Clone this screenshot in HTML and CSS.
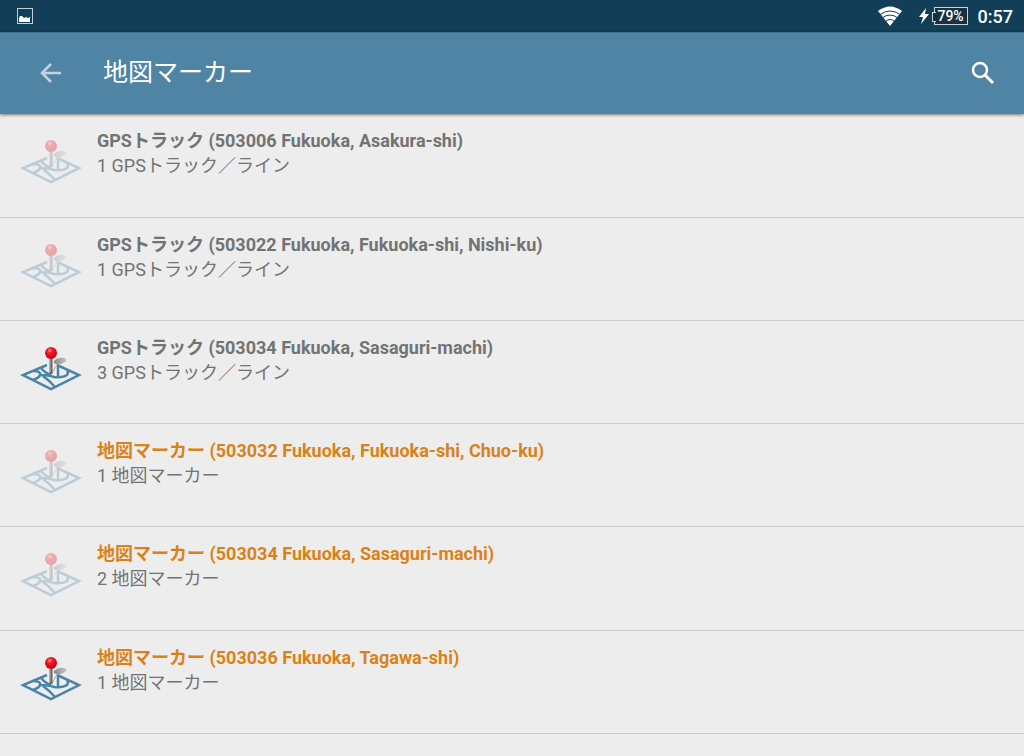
FILE: index.html
```html
<!DOCTYPE html>
<html lang="ja">
<head>
<meta charset="utf-8">
<meta name="viewport" content="width=device-width, initial-scale=1">
<title>地図マーカー</title>
<link rel="stylesheet" href="styles.css">
</head>
<body>

<svg class="defs" aria-hidden="true">
  <defs>
    <radialGradient id="pin-head" cx="0.4" cy="0.3" r="0.7">
      <stop offset="0" stop-color="#ff9a9a"/>
      <stop offset="0.3" stop-color="#f01c24"/>
      <stop offset="1" stop-color="#c80010"/>
    </radialGradient>
    <linearGradient id="pin-shadow" x1="0" y1="0" x2="1" y2="0">
      <stop offset="0" stop-color="#888"/>
      <stop offset="1" stop-color="#c4c4c4"/>
    </linearGradient>
    <symbol id="map-marker" viewBox="0 0 62 48">
      <g fill="none" stroke="#4a85a8" stroke-width="2.500">
        <path d="M27 21L3 31L31 45L59 31L37 21"/>
        <path d="M13 27Q21 27 20 31Q19 34 13 36"/>
        <path d="M21 24Q25 29 31 31"/>
        <path d="M20 31Q29 31 34 33Q43 34 47 31Q49 28 47 26"/>
        <path d="M23 32Q30 37 35 43"/>
        <path d="M38 22V32"/>
      </g>
      <path d="M32 29L38 19" stroke="#aaa" stroke-width="1"/>
      <ellipse cx="40" cy="17" rx="6.500" ry="3" transform="rotate(-12 40 17)" fill="url(#pin-shadow)"/>
      <path d="M31 13V30" stroke="#666" stroke-width="3"/>
      <path d="M30 13V28" stroke="#bbb" stroke-width="1"/>
      <circle cx="31" cy="9" r="6" fill="url(#pin-head)"/>
    </symbol>
  </defs>
</svg>

<div class="status-bar">
  <svg class="picture-icon" viewBox="0 0 16 16">
    <rect x="0.500" y="0.500" width="15" height="15" fill="none" stroke="#c3d0d8"/>
    <path d="M2 14V10L3 8H5L7 10L9 9L11 10L13 9V14Z" fill="#fff"/>
  </svg>
  <div class="status-info">
    <svg class="wifi-icon" viewBox="0 0 26 20">
      <path d="M1 5Q13 -4 25 5L13 20Z" fill="#fff"/>
      <g fill="none" stroke="#123e57" stroke-width="1">
        <path d="M3 8.500Q13 1.500 23 8.500"/>
        <path d="M5 12Q13 6 21 12"/>
        <path d="M8 15.500Q13 11.500 18 15.500"/>
      </g>
    </svg>
    <svg class="bolt-icon" viewBox="0 0 10 16">
      <path d="M7 0L0 9H4L2 16L10 6H6Z" fill="#fff"/>
    </svg>
    <span class="battery">79%</span>
    <span class="clock">0:57</span>
  </div>
</div>

<header class="app-bar">
  <button class="icon-button back" type="button" aria-label="戻る">
    <svg width="22" height="20" viewBox="0 0 22 20" fill="none" stroke="#c2d4df" stroke-width="2.500">
      <path d="M11 1L2 10L11 19M2 10H21"/>
    </svg>
  </button>
  <h1>地図マーカー</h1>
  <button class="icon-button search" type="button" aria-label="検索">
    <svg width="24" height="24" viewBox="0 0 24 24" fill="none" stroke="#fff">
      <circle cx="9" cy="9" r="7" stroke-width="2.500"/>
      <path d="M14 14L22 22" stroke-width="3"/>
    </svg>
  </button>
</header>

<ul class="list">
  <li class="item">
    <svg class="marker off"><use href="#map-marker"/></svg>
    <div class="text">
      <h2>GPSトラック (503006 Fukuoka, Asakura-shi)</h2>
      <p>1 GPSトラック／ライン</p>
    </div>
  </li>
  <li class="item">
    <svg class="marker off"><use href="#map-marker"/></svg>
    <div class="text">
      <h2>GPSトラック (503022 Fukuoka, Fukuoka-shi, Nishi-ku)</h2>
      <p>1 GPSトラック／ライン</p>
    </div>
  </li>
  <li class="item">
    <svg class="marker"><use href="#map-marker"/></svg>
    <div class="text">
      <h2>GPSトラック (503034 Fukuoka, Sasaguri-machi)</h2>
      <p>3 GPSトラック／ライン</p>
    </div>
  </li>
  <li class="item places">
    <svg class="marker off"><use href="#map-marker"/></svg>
    <div class="text">
      <h2>地図マーカー (503032 Fukuoka, Fukuoka-shi, Chuo-ku)</h2>
      <p>1 地図マーカー</p>
    </div>
  </li>
  <li class="item places">
    <svg class="marker off"><use href="#map-marker"/></svg>
    <div class="text">
      <h2>地図マーカー (503034 Fukuoka, Sasaguri-machi)</h2>
      <p>2 地図マーカー</p>
    </div>
  </li>
  <li class="item places">
    <svg class="marker"><use href="#map-marker"/></svg>
    <div class="text">
      <h2>地図マーカー (503036 Fukuoka, Tagawa-shi)</h2>
      <p>1 地図マーカー</p>
    </div>
  </li>
</ul>

</body>
</html>
```
FILE: styles.css
```css
* {
  box-sizing: border-box;
}

body {
  margin: 0;
  background: #ededed;
  color: #737373;
  font-family: Roboto, "Noto Sans CJK JP", sans-serif;
  font-size: 18px;
}

h1, h2, p, ul {
  margin: 0;
  padding: 0;
}

.defs {
  display: block;
  width: 0;
  height: 0;
}

/* status bar */

.status-bar {
  display: flex;
  align-items: center;
  justify-content: space-between;
  height: 32px;
  padding: 0 11px 0 17px;
  background: #123e57;
  color: #fff;
}

.picture-icon {
  width: 16px;
  height: 16px;
}

.status-info {
  display: flex;
  align-items: center;
}

.wifi-icon {
  width: 26px;
  height: 20px;
  margin-right: 16px;
}

.bolt-icon {
  width: 10px;
  height: 16px;
  margin-right: 5px;
}

.battery {
  position: relative;
  width: 34px;
  height: 18px;
  margin-right: 10px;
  border: 1px solid #c8d2d8;
  background: #17313f;
  font-size: 14px;
  font-weight: 500;
  line-height: 16px;
  text-align: center;
}

.battery::before {
  content: "";
  position: absolute;
  left: -3px;
  top: 4px;
  width: 3px;
  height: 8px;
  border: 1px solid #c8d2d8;
  border-right: 0;
  background: #17313f;
}

.clock {
  font-weight: 500;
}

/* title bar */

.app-bar {
  display: flex;
  align-items: center;
  height: 82px;
  padding: 0 29px 2px 40px;
  border-top: 1px solid #3d728f;
  background: #5084a4;
  box-shadow: 0 1px 3px rgba(0, 0, 0, 0.5);
  color: #fff;
}

.app-bar h1 {
  flex: 1;
  font-size: 25px;
  font-weight: 400;
  line-height: 32px;
}

.icon-button {
  display: flex;
  padding: 0;
  border: 0;
  background: none;
  cursor: pointer;
}

.back {
  margin-right: 41px;
}

/* list */

.list {
  list-style: none;
}

.item {
  display: flex;
  gap: 15px;
  height: 103px;
  padding: 14px 20px;
  border-bottom: 1px solid #cbcbcb;
}

.item:nth-child(4n + 1) {
  height: 104px;
}

.marker {
  flex: none;
  width: 62px;
  height: 48px;
  margin-top: 9px;
}

.off {
  opacity: 0.3;
}

.text {
  line-height: 25px;
}

.text h2 {
  font-size: 18px;
  font-weight: 700;
  line-height: 25px;
}

.places h2 {
  color: #d9821a;
}
```
